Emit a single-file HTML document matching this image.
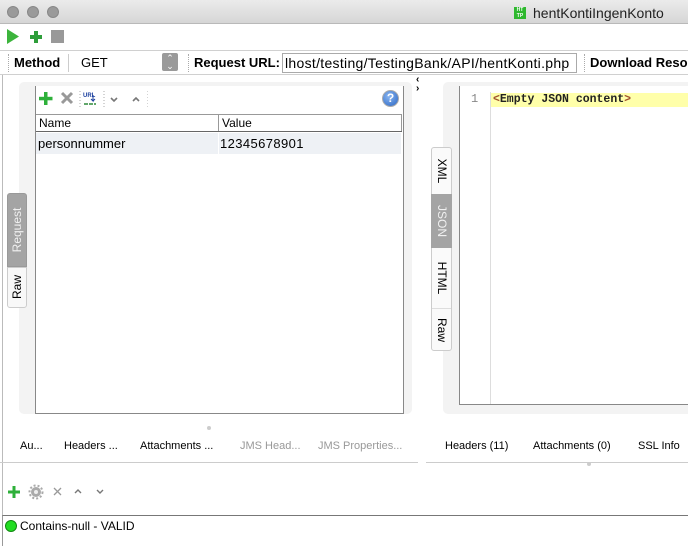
<!DOCTYPE html><html><head><style>
*{box-sizing:border-box;margin:0;padding:0}
body{width:688px;height:546px;overflow:hidden;background:#fff;font-family:"Liberation Sans",sans-serif;font-size:12px;color:#000;position:relative}
.a{position:absolute}
.t{white-space:nowrap}
</style></head><body>
<div class="a" style="left:0;top:0;width:688px;height:24px;background:linear-gradient(#ebebeb,#d6d6d6);border-bottom:1px solid #b9b9b9"></div>
<div class="a" style="left:7px;top:6px;width:12px;height:12px;border-radius:6px;background:#9a9a9a;border:1px solid #888"></div>
<div class="a" style="left:27px;top:6px;width:12px;height:12px;border-radius:6px;background:#9a9a9a;border:1px solid #888"></div>
<div class="a" style="left:47px;top:6px;width:12px;height:12px;border-radius:6px;background:#9a9a9a;border:1px solid #888"></div>
<div class="a" style="left:514px;top:7px;width:12px;height:12px;background:#2eb82e;color:#fff;font-size:5px;line-height:6px;text-align:center;font-weight:bold">HT<br>TP</div>
<div class="a t" style="left:533px;top:5px;font-size:14px;color:#222">hentKontiIngenKonto</div>
<svg class="a" style="left:7px;top:29px" width="60" height="16"><polygon points="0,0 12,7.5 0,15" fill="#3cb43c"/><rect x="27" y="2" width="4" height="12" fill="#2e9e3a"/><rect x="23" y="6" width="12" height="4" fill="#2e9e3a"/><rect x="44" y="1" width="13" height="13" fill="#999"/></svg>
<div class="a" style="left:0;top:50px;width:688px;height:1px;background:#d0d0d0"></div>
<div class="a" style="left:8px;top:54px;height:18px;border-left:1px dotted #aaa"></div>
<div class="a t" style="left:14px;top:55px;font-size:13px;font-weight:bold">Method</div>
<div class="a" style="left:68px;top:54px;width:112px;height:18px;border-left:1px solid #ccc"></div>
<div class="a t" style="left:81px;top:55px;font-size:13px">GET</div>
<div class="a" style="left:162px;top:53px;width:16px;height:18px;background:#9a9a9a;border-radius:2px;color:#fff;font-size:9px;line-height:8px;text-align:center;padding-top:1px">&#8963;<br>&#8964;</div>
<div class="a" style="left:188px;top:54px;height:18px;border-left:1px dotted #aaa"></div>
<div class="a t" style="left:194px;top:55px;font-size:13px;font-weight:bold">Request URL:</div>
<div class="a t" style="left:282px;top:53px;width:295px;height:20px;border:1px solid #aaa;font-size:14px;letter-spacing:0.3px;padding:1px 0 0 2px;overflow:hidden">lhost/testing/TestingBank/API/hentKonti.php</div>
<div class="a" style="left:584px;top:54px;height:18px;border-left:1px dotted #aaa"></div>
<div class="a t" style="left:590px;top:55px;font-size:13px;font-weight:bold">Download Reso</div>
<div class="a" style="left:0;top:74px;width:688px;height:1px;background:#d0d0d0"></div>
<div class="a" style="left:2px;top:75px;width:1px;height:471px;background:#bbb"></div>
<div class="a" style="left:19px;top:82px;width:393px;height:332px;background:#f3f3f3;border-radius:5px"></div>
<div class="a" style="left:35px;top:86px;width:369px;height:328px;background:#fff;border:1px solid #888;border-top:none"></div>
<svg class="a" style="left:38px;top:90px" width="110" height="18"><rect x="6" y="2" width="3.5" height="13" fill="#2eb03a"/><rect x="1" y="6.8" width="13.5" height="3.5" fill="#2eb03a"/><path d="M24 3l10 10M34 3l-10 10" stroke="#999" stroke-width="3"/><line x1="42" y1="1" x2="42" y2="17" stroke="#aaa" stroke-dasharray="1,2"/><text x="45" y="7" font-size="6" font-weight="bold" fill="#1b3f9e" font-family="Liberation Sans">URL</text><path d="M55 5v6l-2-2M55 11l2-2" stroke="#1b3f9e" fill="none"/><path d="M46 14h12" stroke="#2e8a3a" stroke-width="1.5" stroke-dasharray="4,1"/><line x1="66" y1="1" x2="66" y2="17" stroke="#aaa" stroke-dasharray="1,2"/><path d="M73 8l3 3 3-3" stroke="#777" stroke-width="1.6" fill="none"/><path d="M95 11l3-3 3 3" stroke="#777" stroke-width="1.6" fill="none"/><line x1="110" y1="1" x2="110" y2="17" stroke="#aaa" stroke-dasharray="1,2"/></svg>
<div class="a" style="left:382px;top:90px;width:17px;height:17px;border-radius:9px;background:radial-gradient(circle at 40% 35%,#8ab6f0,#2a66c4);border:1px solid #aaa;color:#fff;font-weight:bold;font-size:12px;text-align:center;line-height:15px">?</div>
<div class="a" style="left:36px;top:114px;width:366px;height:18px;border:1px solid #999;border-left:none;background:#fff"></div>
<div class="a" style="left:218px;top:114px;width:1px;height:18px;background:#999"></div>
<div class="a" style="left:36px;top:131px;width:366px;height:1px;background:#666"></div>
<div class="a t" style="left:39px;top:116px;font-size:12px">Name</div>
<div class="a t" style="left:222px;top:116px;font-size:12px">Value</div>
<div class="a" style="left:36px;top:133px;width:365px;height:21px;background:#eef1f5"></div>
<div class="a" style="left:218px;top:133px;width:1px;height:21px;background:#fff"></div>
<div class="a t" style="left:38px;top:136px;font-size:13px">personnummer</div>
<div class="a t" style="left:220px;top:136px;font-size:13px;letter-spacing:0.4px">12345678901</div>
<div class="a" style="left:7px;top:193px;width:20px;height:74px;background:#a4a4a4;border-radius:3px 3px 0 0;border:1px solid #999"></div>
<div class="a t" style="left:17px;top:230px;transform:translate(-50%,-50%) rotate(-90deg);color:#f0f0f0;font-size:12px">Request</div>
<div class="a" style="left:7px;top:267px;width:20px;height:41px;background:#f8f8f8;border:1px solid #ccc;border-radius:0 0 3px 3px"></div>
<div class="a t" style="left:17px;top:287px;transform:translate(-50%,-50%) rotate(-90deg);font-size:12px">Raw</div>
<div class="a t" style="left:416px;top:75px;font-size:10px;font-weight:bold;line-height:9px">&#8249;<br>&#8250;</div>
<div class="a" style="left:443px;top:82px;width:245px;height:332px;background:#f3f3f3;border-radius:5px 0 0 5px"></div>
<div class="a" style="left:459px;top:86px;width:229px;height:319px;background:#fff;border-left:1px solid #888;border-bottom:1px solid #888"></div>
<div class="a" style="left:490px;top:92px;width:1px;height:312px;background:#ddd"></div>
<div class="a" style="left:491px;top:93px;width:197px;height:14px;background:#ffffaa"></div>
<div class="a t" style="left:471px;top:92px;font-family:'Liberation Mono',monospace;font-size:12px;color:#888">1</div>
<div class="a t" style="left:493px;top:94px;font-family:'Liberation Mono',monospace;font-size:11.5px;font-weight:bold;color:#222;line-height:12px"><span style="color:#a0522d">&lt;</span>Empty JSON content<span style="color:#a0522d">&gt;</span></div>
<div class="a" style="left:431px;top:147px;width:21px;height:204px;background:#fafafa;border:1px solid #ccc;border-radius:3px"></div>
<div class="a" style="left:431px;top:194px;width:21px;height:54px;background:#a4a4a4"></div>
<div class="a" style="left:432px;top:308px;width:19px;height:1px;background:#ddd"></div>
<div class="a t" style="left:442px;top:171px;transform:translate(-50%,-50%) rotate(90deg);font-size:12px">XML</div>
<div class="a t" style="left:442px;top:221px;transform:translate(-50%,-50%) rotate(90deg);font-size:12px;color:#f0f0f0">JSON</div>
<div class="a t" style="left:442px;top:278px;transform:translate(-50%,-50%) rotate(90deg);font-size:12px">HTML</div>
<div class="a t" style="left:442px;top:330px;transform:translate(-50%,-50%) rotate(90deg);font-size:12px">Raw</div>
<div class="a" style="left:207px;top:426px;width:4px;height:4px;border-radius:2px;background:#ccc"></div>
<div class="a" style="left:587px;top:462px;width:4px;height:4px;border-radius:2px;background:#ccc"></div>
<div class="a t" style="left:20px;top:440px;font-size:11px">Au...</div>
<div class="a t" style="left:64px;top:440px;font-size:11px">Headers ...</div>
<div class="a t" style="left:140px;top:440px;font-size:11px">Attachments ...</div>
<div class="a t" style="left:240px;top:440px;font-size:11px;color:#999">JMS Head...</div>
<div class="a t" style="left:318px;top:440px;font-size:11px;color:#999">JMS Properties...</div>
<div class="a" style="left:0;top:462px;width:418px;height:1px;background:#ccc"></div>
<div class="a t" style="left:445px;top:440px;font-size:11px">Headers (11)</div>
<div class="a t" style="left:533px;top:440px;font-size:11px">Attachments (0)</div>
<div class="a t" style="left:638px;top:440px;font-size:11px">SSL Info</div>
<div class="a" style="left:426px;top:462px;width:262px;height:1px;background:#ccc"></div>
<svg class="a" style="left:6px;top:484px" width="104" height="16"><rect x="6.5" y="2" width="3" height="12" fill="#2eb03a"/><rect x="2" y="6.5" width="12" height="3" fill="#2eb03a"/><circle cx="30" cy="8" r="5" fill="#aaa"/><circle cx="30" cy="8" r="6.5" fill="none" stroke="#aaa" stroke-width="2" stroke-dasharray="2,2"/><circle cx="30" cy="8" r="2" fill="#eee"/><path d="M48 4l7 7M55 4l-7 7" stroke="#999" stroke-width="1.3"/><path d="M69 9l3-3 3 3" stroke="#777" stroke-width="1.4" fill="none"/><path d="M91 6l3 3 3-3" stroke="#777" stroke-width="1.4" fill="none"/></svg>
<div class="a" style="left:2px;top:515px;width:686px;height:31px;border-top:1px solid #777;border-left:1px solid #999;background:#fff"></div>
<div class="a" style="left:5px;top:520px;width:12px;height:12px;border-radius:6px;background:#22dd22;border:1px solid #118811"></div>
<div class="a t" style="left:20px;top:519px;font-size:12px">Contains-null - VALID</div>
</body></html>
